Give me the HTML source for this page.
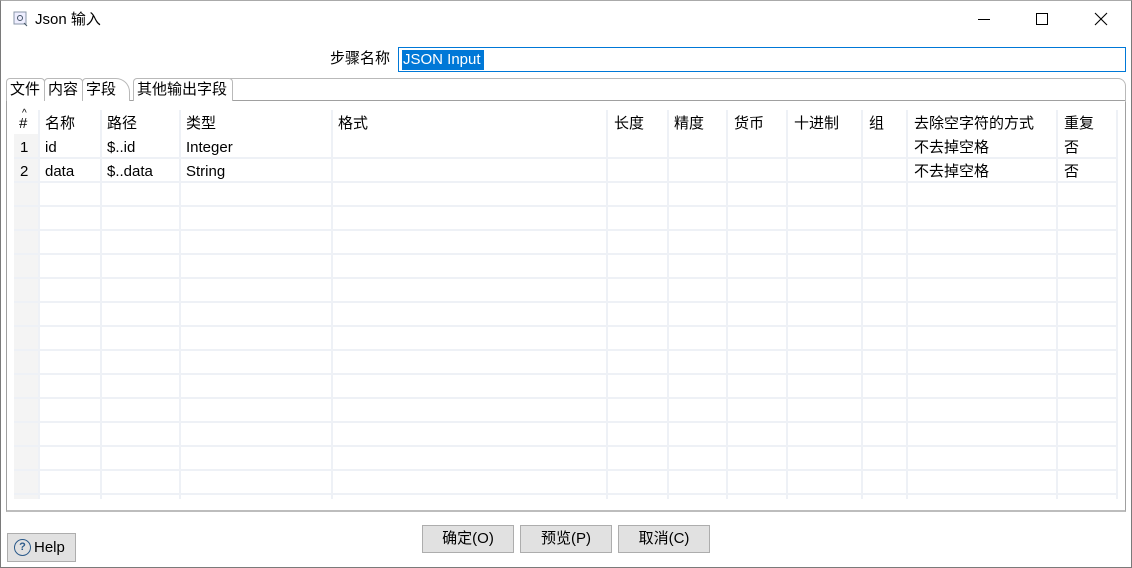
<!DOCTYPE html>
<html><head><meta charset="utf-8"><style>
*{margin:0;padding:0;box-sizing:border-box}
body{width:1132px;height:568px;background:#fff;font-family:"Liberation Sans","Noto Sans CJK SC",sans-serif;font-size:15px;color:#000;position:relative;overflow:hidden}
.a{position:absolute;white-space:nowrap;line-height:20px}
.btn{position:absolute;background:#e1e1e1;border:1px solid #adadad;text-align:center;font-size:15px}
.vl{position:absolute;top:110px;width:2px;height:389px;background:#eef1f6}
.hl{position:absolute;left:14px;width:1103px;height:2px;background:#eef1f6}
.tab{position:absolute;top:78px;height:23px;border:1px solid #b9b9b9;border-bottom:none;background:#fff;padding:1px 0 0 3px;font-size:15px;line-height:20px;border-radius:4px 4px 0 0}
</style></head><body>
<div class="a" style="left:0;top:0;width:1132px;height:568px;border:1px solid #7a7a7a;border-top-color:#aaa"></div>
<svg class="a" style="left:13px;top:11px" width="16" height="16"><rect x="1" y="1" width="12" height="12" fill="#eef" stroke="#8a97a8"/><circle cx="7" cy="7" r="2.5" fill="none" stroke="#456"/><path d="M11 12 l3 3" stroke="#456"/></svg>
<div class="a" style="left:35px;top:10px;font-size:15px">Json 输入</div>
<div class="a" style="left:978px;top:19px;width:12px;height:1px;background:#000"></div>
<div class="a" style="left:1036px;top:13px;width:12px;height:12px;border:1px solid #000"></div>
<svg class="a" style="left:1094px;top:12px" width="14" height="14"><path d="M1 1L13 13M13 1L1 13" stroke="#000" stroke-width="1.1"/></svg>
<div class="a" style="left:330px;top:49px">步骤名称</div>
<div class="a" style="left:398px;top:47px;width:728px;height:25px;border:1px solid #0078d7"></div>
<div class="a" style="left:402px;top:50px;width:82px;height:20px;background:#0078d7;color:#fff;padding-left:1px;font-size:15px">JSON Input</div>
<div class="a" style="left:6px;top:100px;width:1120px;height:412px;border:1px solid #a0a0a0;border-bottom:2px solid #bdbdbd"></div>
<div class="a" style="left:230px;top:78px;width:896px;height:24px;border-top:1px solid #b9b9b9;border-right:1px solid #b9b9b9;border-radius:0 8px 0 0"></div>
<div class="tab" style="left:6px;width:39px">文件</div>
<div class="tab" style="left:44px;width:39px">内容</div>
<div class="tab" style="left:82px;width:48px;border-radius:4px 14px 0 0">字段</div>
<div class="tab" style="left:133px;width:100px">其他输出字段</div>
<div class="a" style="left:83px;top:100px;width:46px;height:2px;background:#fff"></div>
<div class="a" style="left:13px;top:108px;width:1106px;height:392px;background:#fff"></div>
<div class="a" style="left:14px;top:134px;width:24px;height:365px;background:#f4f4f4"></div>
<div class="vl" style="left:38px"></div><div class="vl" style="left:100px"></div><div class="vl" style="left:179px"></div><div class="vl" style="left:331px"></div><div class="vl" style="left:606px"></div><div class="vl" style="left:667px"></div><div class="vl" style="left:726px"></div><div class="vl" style="left:786px"></div><div class="vl" style="left:861px"></div><div class="vl" style="left:906px"></div><div class="vl" style="left:1056px"></div><div class="vl" style="left:1116px"></div>
<div class="hl" style="top:157px"></div><div class="hl" style="top:181px"></div><div class="hl" style="top:205px"></div><div class="hl" style="top:229px"></div><div class="hl" style="top:253px"></div><div class="hl" style="top:277px"></div><div class="hl" style="top:301px"></div><div class="hl" style="top:325px"></div><div class="hl" style="top:349px"></div><div class="hl" style="top:373px"></div><div class="hl" style="top:397px"></div><div class="hl" style="top:421px"></div><div class="hl" style="top:445px"></div><div class="hl" style="top:469px"></div><div class="hl" style="top:493px"></div>
<div class="a" style="left:22px;top:104px;font-size:10px">^</div>
<div class="a" style="left:19px;top:114px">#</div>
<div class="a" style="left:45px;top:114px">名称</div><div class="a" style="left:107px;top:114px">路径</div><div class="a" style="left:186px;top:114px">类型</div><div class="a" style="left:338px;top:114px">格式</div><div class="a" style="left:614px;top:114px">长度</div><div class="a" style="left:674px;top:114px">精度</div><div class="a" style="left:734px;top:114px">货币</div><div class="a" style="left:794px;top:114px">十进制</div><div class="a" style="left:869px;top:114px">组</div><div class="a" style="left:914px;top:114px">去除空字符的方式</div><div class="a" style="left:1064px;top:114px">重复</div>
<div class="a" style="left:20px;top:138px">1</div><div class="a" style="left:45px;top:138px">id</div><div class="a" style="left:107px;top:138px">$..id</div><div class="a" style="left:186px;top:138px">Integer</div><div class="a" style="left:914px;top:138px">不去掉空格</div><div class="a" style="left:1064px;top:138px">否</div>
<div class="a" style="left:20px;top:162px">2</div><div class="a" style="left:45px;top:162px">data</div><div class="a" style="left:107px;top:162px">$..data</div><div class="a" style="left:186px;top:162px">String</div><div class="a" style="left:914px;top:162px">不去掉空格</div><div class="a" style="left:1064px;top:162px">否</div>
<div class="btn" style="left:422px;top:525px;width:92px;height:28px;line-height:26px">确定(O)</div>
<div class="btn" style="left:520px;top:525px;width:92px;height:28px;line-height:26px">预览(P)</div>
<div class="btn" style="left:618px;top:525px;width:92px;height:28px;line-height:26px">取消(C)</div>
<div class="btn" style="left:7px;top:533px;width:69px;height:29px;display:flex;align-items:center;padding-left:6px;gap:3px"><span style="display:inline-block;width:17px;height:17px;border-radius:50%;border:1.5px solid #2b5a8a;font-size:11px;line-height:14px;text-align:center;color:#2b5a8a;font-weight:bold">?</span>Help</div>
</body></html>
